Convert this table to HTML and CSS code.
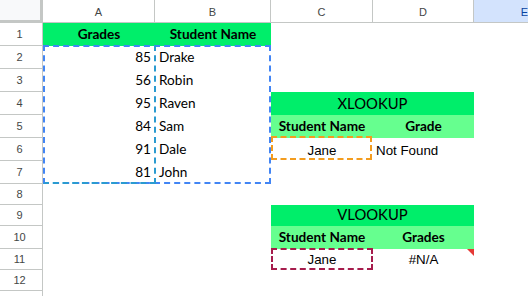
FILE: index.html
```html
<!DOCTYPE html>
<html>
<head>
<meta charset="utf-8">
<link rel="stylesheet" href="styles.css">
</head>
<body>
<div class="wrap">
<div class="sheet">
  <div class="corner"></div>
  <div class="ch">A</div>
  <div class="ch">B</div>
  <div class="ch">C</div>
  <div class="ch">D</div>
  <div class="ch ch-sel">E</div>

  <div class="rh">1</div>
  <div class="c hdr center"><span>Grades</span></div>
  <div class="c hdr center"><span>Student Name</span></div>
  <div class="c"></div><div class="c"></div><div class="c"></div>

  <div class="rh">2</div>
  <div class="c num"><span>85</span></div>
  <div class="c name"><span>Drake</span></div>
  <div class="c"></div><div class="c"></div><div class="c"></div>

  <div class="rh">3</div>
  <div class="c num"><span>56</span></div>
  <div class="c name"><span>Robin</span></div>
  <div class="c"></div><div class="c"></div><div class="c"></div>

  <div class="rh">4</div>
  <div class="c num"><span>95</span></div>
  <div class="c name"><span>Raven</span></div>
  <div class="c title span2"><span>XLOOKUP</span></div>
  <div class="c"></div>

  <div class="rh">5</div>
  <div class="c num"><span>84</span></div>
  <div class="c name"><span>Sam</span></div>
  <div class="c sub center"><span>Student Name</span></div>
  <div class="c sub center"><span>Grade</span></div>
  <div class="c"></div>

  <div class="rh">6</div>
  <div class="c num"><span>91</span></div>
  <div class="c name"><span>Dale</span></div>
  <div class="c arial center"><span>Jane</span></div>
  <div class="c arial left"><span>Not Found</span></div>
  <div class="c"></div>

  <div class="rh">7</div>
  <div class="c num"><span>81</span></div>
  <div class="c name"><span>John</span></div>
  <div class="c"></div><div class="c"></div><div class="c"></div>

  <div class="rh">8</div>
  <div class="c"></div><div class="c"></div><div class="c"></div><div class="c"></div><div class="c"></div>

  <div class="rh">9</div>
  <div class="c"></div><div class="c"></div>
  <div class="c title span2"><span>VLOOKUP</span></div>
  <div class="c"></div>

  <div class="rh">10</div>
  <div class="c"></div><div class="c"></div>
  <div class="c sub center"><span>Student Name</span></div>
  <div class="c sub center"><span>Grades</span></div>
  <div class="c"></div>

  <div class="rh">11</div>
  <div class="c"></div><div class="c"></div>
  <div class="c arial center"><span>Jane</span></div>
  <div class="c arial center err"><span>#N/A</span><i class="tri"></i></div>
  <div class="c"></div>

  <div class="rh">12</div>
  <div class="c"></div><div class="c"></div><div class="c"></div><div class="c"></div><div class="c"></div>

  <div class="rh"></div>
  <div class="c"></div><div class="c"></div><div class="c"></div><div class="c"></div><div class="c"></div>
</div>
<div class="sheet overlay">
  <div class="range range-ab"></div>
  <div class="range range-a"></div>
  <div class="range range-orange"></div>
  <div class="range range-maroon"></div>
</div>
</div>
</body>
</html>
```
FILE: styles.css
```css
* { box-sizing: border-box; }
html, body { margin: 0; padding: 0; background: #fff; }
body { width: 528px; height: 296px; overflow: hidden; }

.wrap {
  position: relative;
  width: 528px;
  height: 296px;
  overflow: hidden;
}

.sheet {
  display: grid;
  grid-template-columns: 43px 112px 116px 102px 101px 101px;
  grid-template-rows: 23px repeat(7, 23px) 21px 21px 23px 21px 21px 21px;
  width: 575px;
  height: 296px;
  background: #fff;
}

.overlay {
  position: absolute;
  top: 0;
  left: 0;
  background: transparent;
  pointer-events: none;
}

.corner {
  background: #f8f9fa;
  border-right: 3px solid #c4c7c5;
  border-bottom: 3px solid #c4c7c5;
}

.ch {
  display: flex;
  align-items: center;
  justify-content: center;
  border-right: 1px solid #c4c7c5;
  border-bottom: 1px solid #c4c7c5;
  font-family: "Liberation Sans", Arial, sans-serif;
  font-size: 11px;
  color: #444746;
  padding-top: 1px;
}
.ch-sel { background: #d3e3fd; color: #0842a0; border-right: none; }

.rh {
  display: flex;
  align-items: center;
  justify-content: center;
  border-right: 1px solid #c4c7c5;
  border-bottom: 1px solid #c4c7c5;
  font-family: "Liberation Sans", Arial, sans-serif;
  font-size: 11px;
  color: #444746;
  padding-right: 3px;
  overflow: hidden;
}

.c {
  display: flex;
  align-items: flex-end;
  font-family: Lato, "Open Sans", sans-serif;
  font-size: 13.6px;
  color: #000;
  padding: 0 3px 4px 3px;
  white-space: nowrap;
  overflow: hidden;
  position: relative;
}
.c span { display: block; line-height: 16px; }

.center { justify-content: center; }
.left { justify-content: flex-start; }
.num { justify-content: flex-end; padding-right: 4px; }
.name { justify-content: flex-start; padding-left: 4px; }

.hdr { background: #00ee6a; font-weight: 700; }
.title {
  grid-column: span 2;
  background: #00ee6a;
  justify-content: center;
  font-size: 14.8px;
  padding-bottom: 4px;
}
.sub { background: #66ff8f; font-weight: 700; }

.arial {
  font-family: "Liberation Sans", Arial, sans-serif;
  font-size: 13.33px;
  padding-bottom: 2px;
}
.tri {
  position: absolute;
  top: 0;
  right: 0;
  width: 0;
  height: 0;
  border-top: 7px solid #e53935;
  border-left: 7px solid transparent;
}

.range-ab {
  grid-row: 3 / 9;
  grid-column: 2 / 4;
  margin-top: -1px;
  border: 2px dashed #4285f4;
}
.range-a {
  grid-row: 3 / 9;
  grid-column: 2 / 3;
  margin-top: -1px;
  margin-right: -1px;
  border: 2px dashed #2a9bd0;
  border-left-color: transparent;
  border-top-color: transparent;
}
.range-orange {
  grid-row: 7 / 8;
  grid-column: 4 / 5;
  margin: -2px 1px 1px 0;
  border: 2px dashed #f39c1f;
}
.range-maroon {
  grid-row: 12 / 13;
  grid-column: 4 / 5;
  margin: -1px 0 0 0;
  border: 2px dashed #a61c4c;
}
```
